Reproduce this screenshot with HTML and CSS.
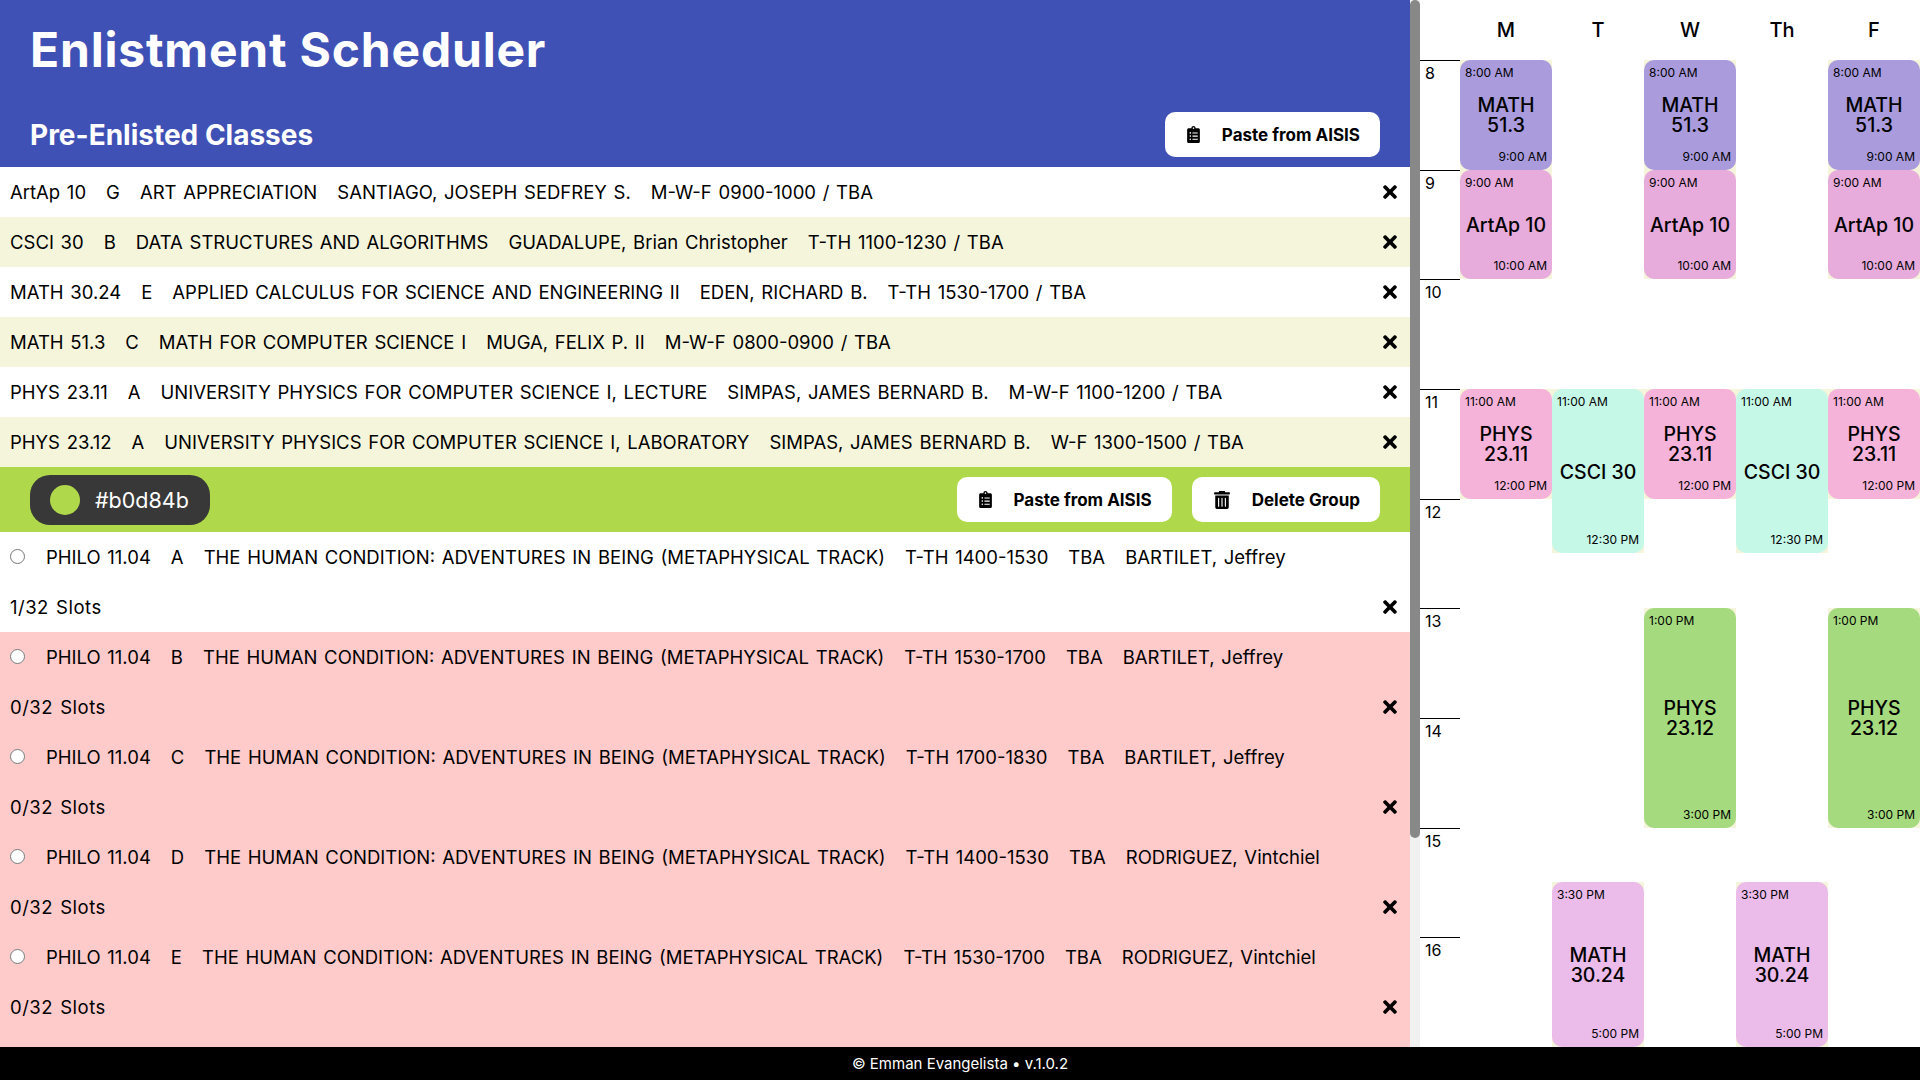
FILE: index.html
```html
<!DOCTYPE html>
<html lang="en">

<head>
  <meta charset="UTF-8" />
  <meta name="viewport" content="width=device-width, initial-scale=1.0" />
  <title>Enlistment Scheduler</title>
  <link rel="stylesheet" href="styles.css">
</head>

<body>
  <svg class="defs" width="0" height="0">
    <symbol id="i-x" viewBox="0 0 352 512">
      <path d="M242.72 256l100.07-100.07c12.28-12.28 12.28-32.19 0-44.48l-22.24-22.24c-12.28-12.28-32.19-12.28-44.48 0L176 189.28 75.93 89.21c-12.28-12.28-32.19-12.28-44.48 0L9.21 111.45c-12.28 12.28-12.28 32.19 0 44.48L109.28 256 9.21 356.07c-12.28 12.28-12.28 32.19 0 44.48l22.24 22.24c12.28 12.28 32.2 12.28 44.48 0L176 322.72l100.07 100.07c12.28 12.28 32.2 12.28 44.48 0l22.24-22.24c12.28-12.28 12.28-32.19 0-44.48L242.72 256z" />
    </symbol>
    <symbol id="i-clip" viewBox="0 0 384 512">
      <path d="M336 64h-80c0-35.3-28.7-64-64-64s-64 28.7-64 64H48C21.5 64 0 85.5 0 112v352c0 26.5 21.5 48 48 48h288c26.5 0 48-21.5 48-48V112c0-26.5-21.5-48-48-48zM96 424c-13.3 0-24-10.7-24-24s10.7-24 24-24 24 10.7 24 24-10.7 24-24 24zm0-96c-13.3 0-24-10.7-24-24s10.7-24 24-24 24 10.7 24 24-10.7 24-24 24zm0-96c-13.3 0-24-10.7-24-24s10.7-24 24-24 24 10.7 24 24-10.7 24-24 24zm96-192c13.3 0 24 10.7 24 24s-10.7 24-24 24-24-10.7-24-24 10.7-24 24-24zm128 368c0 4.4-3.6 8-8 8H168c-4.4 0-8-3.6-8-8v-16c0-4.4 3.6-8 8-8h144c4.4 0 8 3.6 8 8v16zm0-96c0 4.4-3.6 8-8 8H168c-4.4 0-8-3.6-8-8v-16c0-4.4 3.6-8 8-8h144c4.4 0 8 3.6 8 8v16zm0-96c0 4.4-3.6 8-8 8H168c-4.4 0-8-3.6-8-8v-16c0-4.4 3.6-8 8-8h144c4.4 0 8 3.6 8 8v16z" />
    </symbol>
    <symbol id="i-trash" viewBox="0 0 448 512">
      <path d="M32 464a48 48 0 0 0 48 48h288a48 48 0 0 0 48-48V128H32zm272-256a16 16 0 0 1 32 0v224a16 16 0 0 1-32 0zm-96 0a16 16 0 0 1 32 0v224a16 16 0 0 1-32 0zm-96 0a16 16 0 0 1 32 0v224a16 16 0 0 1-32 0zM432 32H312l-3.76-23.63A24 24 0 0 0 286.75 0H161.25a24 24 0 0 0-21.5 8.37L136 32H16A16 16 0 0 0 0 48v32a16 16 0 0 0 16 16h416a16 16 0 0 0 16-16V48a16 16 0 0 0-16-16z" />
    </symbol>
  </svg>

  <div id="main">
    <div id="classes">
      <header>
        <h1>Enlistment Scheduler</h1>
        <div class="header-row">
          <h2>Pre-Enlisted Classes</h2>
          <button class="btn" type="button"><svg class="icon-clip"><use href="#i-clip" /></svg>Paste from AISIS</button>
        </div>
      </header>

      <div class="row">
        <div class="fields"><span>ArtAp 10</span><span>G</span><span>ART APPRECIATION</span><span>SANTIAGO, JOSEPH SEDFREY S.</span><span>M-W-F 0900-1000 / TBA</span></div>
        <svg class="icon-x"><use href="#i-x" /></svg>
      </div>
      <div class="row">
        <div class="fields"><span>CSCI 30</span><span>B</span><span>DATA STRUCTURES AND ALGORITHMS</span><span>GUADALUPE, Brian Christopher</span><span>T-TH 1100-1230 / TBA</span></div>
        <svg class="icon-x"><use href="#i-x" /></svg>
      </div>
      <div class="row">
        <div class="fields"><span>MATH 30.24</span><span>E</span><span>APPLIED CALCULUS FOR SCIENCE AND ENGINEERING II</span><span>EDEN, RICHARD B.</span><span>T-TH 1530-1700 / TBA</span></div>
        <svg class="icon-x"><use href="#i-x" /></svg>
      </div>
      <div class="row">
        <div class="fields"><span>MATH 51.3</span><span>C</span><span>MATH FOR COMPUTER SCIENCE I</span><span>MUGA, FELIX P. II</span><span>M-W-F 0800-0900 / TBA</span></div>
        <svg class="icon-x"><use href="#i-x" /></svg>
      </div>
      <div class="row">
        <div class="fields"><span>PHYS 23.11</span><span>A</span><span>UNIVERSITY PHYSICS FOR COMPUTER SCIENCE I, LECTURE</span><span>SIMPAS, JAMES BERNARD B.</span><span>M-W-F 1100-1200 / TBA</span></div>
        <svg class="icon-x"><use href="#i-x" /></svg>
      </div>
      <div class="row">
        <div class="fields"><span>PHYS 23.12</span><span>A</span><span>UNIVERSITY PHYSICS FOR COMPUTER SCIENCE I, LABORATORY</span><span>SIMPAS, JAMES BERNARD B.</span><span>W-F 1300-1500 / TBA</span></div>
        <svg class="icon-x"><use href="#i-x" /></svg>
      </div>

      <div class="group-bar">
        <div class="color-pill"><span class="swatch"></span>#b0d84b</div>
        <div class="group-actions">
          <button class="btn" type="button"><svg class="icon-clip"><use href="#i-clip" /></svg>Paste from AISIS</button>
          <button class="btn" type="button"><svg class="icon-trash"><use href="#i-trash" /></svg>Delete Group</button>
        </div>
      </div>

      <div class="section">
        <label class="line">
          <input type="radio" name="philo" />
          <span class="fields"><span>PHILO 11.04</span><span>A</span><span>THE HUMAN CONDITION: ADVENTURES IN BEING (METAPHYSICAL TRACK)</span><span>T-TH 1400-1530</span><span>TBA</span><span>BARTILET, Jeffrey</span></span>
        </label>
        <div class="line"><span class="slots">1/32 Slots</span><svg class="icon-x"><use href="#i-x" /></svg></div>
      </div>
      <div class="section full">
        <label class="line">
          <input type="radio" name="philo" />
          <span class="fields"><span>PHILO 11.04</span><span>B</span><span>THE HUMAN CONDITION: ADVENTURES IN BEING (METAPHYSICAL TRACK)</span><span>T-TH 1530-1700</span><span>TBA</span><span>BARTILET, Jeffrey</span></span>
        </label>
        <div class="line"><span class="slots">0/32 Slots</span><svg class="icon-x"><use href="#i-x" /></svg></div>
      </div>
      <div class="section full">
        <label class="line">
          <input type="radio" name="philo" />
          <span class="fields"><span>PHILO 11.04</span><span>C</span><span>THE HUMAN CONDITION: ADVENTURES IN BEING (METAPHYSICAL TRACK)</span><span>T-TH 1700-1830</span><span>TBA</span><span>BARTILET, Jeffrey</span></span>
        </label>
        <div class="line"><span class="slots">0/32 Slots</span><svg class="icon-x"><use href="#i-x" /></svg></div>
      </div>
      <div class="section full">
        <label class="line">
          <input type="radio" name="philo" />
          <span class="fields"><span>PHILO 11.04</span><span>D</span><span>THE HUMAN CONDITION: ADVENTURES IN BEING (METAPHYSICAL TRACK)</span><span>T-TH 1400-1530</span><span>TBA</span><span>RODRIGUEZ, Vintchiel</span></span>
        </label>
        <div class="line"><span class="slots">0/32 Slots</span><svg class="icon-x"><use href="#i-x" /></svg></div>
      </div>
      <div class="section full">
        <label class="line">
          <input type="radio" name="philo" />
          <span class="fields"><span>PHILO 11.04</span><span>E</span><span>THE HUMAN CONDITION: ADVENTURES IN BEING (METAPHYSICAL TRACK)</span><span>T-TH 1530-1700</span><span>TBA</span><span>RODRIGUEZ, Vintchiel</span></span>
        </label>
        <div class="line"><span class="slots">0/32 Slots</span><svg class="icon-x"><use href="#i-x" /></svg></div>
      </div>
      <div class="section full more"></div>
    </div>

    <div class="scrollbar"><div class="thumb"></div></div>

    <div id="calendar">
      <div class="corner"></div>
      <div class="day">M</div>
      <div class="day">T</div>
      <div class="day">W</div>
      <div class="day">Th</div>
      <div class="day">F</div>

      <div class="hour">8</div>
      <div class="hour">9</div>
      <div class="hour">10</div>
      <div class="hour">11</div>
      <div class="hour">12</div>
      <div class="hour">13</div>
      <div class="hour">14</div>
      <div class="hour">15</div>
      <div class="hour">16</div>

      <div class="slot on-m math513"><div class="event"><span>8:00 AM</span><b>MATH 51.3</b><span class="end">9:00 AM</span></div></div>
      <div class="slot on-w math513"><div class="event"><span>8:00 AM</span><b>MATH 51.3</b><span class="end">9:00 AM</span></div></div>
      <div class="slot on-f math513"><div class="event"><span>8:00 AM</span><b>MATH 51.3</b><span class="end">9:00 AM</span></div></div>

      <div class="slot on-m artap10"><div class="event"><span>9:00 AM</span><b>ArtAp 10</b><span class="end">10:00 AM</span></div></div>
      <div class="slot on-w artap10"><div class="event"><span>9:00 AM</span><b>ArtAp 10</b><span class="end">10:00 AM</span></div></div>
      <div class="slot on-f artap10"><div class="event"><span>9:00 AM</span><b>ArtAp 10</b><span class="end">10:00 AM</span></div></div>

      <div class="slot on-m phys2311"><div class="event"><span>11:00 AM</span><b>PHYS 23.11</b><span class="end">12:00 PM</span></div></div>
      <div class="slot on-w phys2311"><div class="event"><span>11:00 AM</span><b>PHYS 23.11</b><span class="end">12:00 PM</span></div></div>
      <div class="slot on-f phys2311"><div class="event"><span>11:00 AM</span><b>PHYS 23.11</b><span class="end">12:00 PM</span></div></div>

      <div class="slot on-t csci30"><div class="event"><span>11:00 AM</span><b>CSCI 30</b><span class="end">12:30 PM</span></div></div>
      <div class="slot on-th csci30"><div class="event"><span>11:00 AM</span><b>CSCI 30</b><span class="end">12:30 PM</span></div></div>

      <div class="slot on-w phys2312"><div class="event"><span>1:00 PM</span><b>PHYS 23.12</b><span class="end">3:00 PM</span></div></div>
      <div class="slot on-f phys2312"><div class="event"><span>1:00 PM</span><b>PHYS 23.12</b><span class="end">3:00 PM</span></div></div>

      <div class="slot on-t math3024"><div class="event"><span>3:30 PM</span><b>MATH 30.24</b><span class="end">5:00 PM</span></div></div>
      <div class="slot on-th math3024"><div class="event"><span>3:30 PM</span><b>MATH 30.24</b><span class="end">5:00 PM</span></div></div>
    </div>
  </div>

  <footer>© Emman Evangelista • v.1.0.2</footer>
</body>

</html>
```

FILE: styles.css
```css
* {
  box-sizing: border-box;
}

body {
  margin: 0;
  height: 1080px;
  overflow: hidden;
  display: flex;
  flex-direction: column;
  font-family: "Inter", "Liberation Sans", sans-serif;
  font-size: 18.5px;
  color: #000;
  background: #fff;
}

.defs {
  position: absolute;
}

#main {
  display: flex;
  height: 1047px;
}

#classes {
  flex: 0 0 1410px;
  overflow: hidden;
}

.scrollbar {
  flex: 0 0 10px;
  background: #f1f1f1;
}

.thumb {
  height: 838px;
  border-radius: 5px;
  background: #888;
}

header {
  height: 167px;
  padding: 0 30px;
  background: #3f51b5;
  color: #fff;
}

h1 {
  margin: 0;
  height: 100px;
  line-height: 100px;
  font-size: 48px;
  font-weight: 700;
  letter-spacing: 0.8px;
}

h2 {
  margin: 0;
  font-size: 28px;
  font-weight: 700;
}

.header-row {
  display: flex;
  align-items: center;
  justify-content: space-between;
  padding-top: 12px;
}

.btn {
  display: flex;
  align-items: center;
  gap: 22px;
  height: 45px;
  padding: 0 20px 0 22px;
  border: none;
  border-radius: 10px;
  background: #fff;
  color: #000;
  font-family: inherit;
  font-size: 17px;
  font-weight: 700;
}

.icon-clip {
  width: 13px;
  height: 17px;
}

.icon-trash {
  width: 16px;
  height: 18px;
}

.icon-x {
  flex: none;
  width: 14px;
  height: 20px;
}

.row,
.line {
  display: flex;
  align-items: center;
  justify-content: space-between;
  height: 50px;
  padding: 0 13px 0 10px;
}

.row:nth-of-type(even) {
  background: #f5f5dc;
}

.fields {
  display: flex;
  gap: 20px;
  white-space: nowrap;
  word-spacing: 1.5px;
}

.slots {
  letter-spacing: 0.5px;
  word-spacing: 1.5px;
}

.group-bar {
  display: flex;
  align-items: center;
  justify-content: space-between;
  height: 65px;
  padding: 0 30px;
  background: #b0d84b;
}

.color-pill {
  display: flex;
  align-items: center;
  gap: 15px;
  width: 180px;
  height: 50px;
  padding-left: 20px;
  border-radius: 20px;
  background: #383838;
  color: #fff;
  font-size: 21.5px;
}

.swatch {
  width: 30px;
  height: 30px;
  border-radius: 50%;
  background: #b0d84b;
}

.group-actions {
  display: flex;
  gap: 20px;
}

.section.full {
  background: #ffcaca;
}

.section.more {
  height: 15px;
}

.line input {
  flex: none;
  width: 15px;
  height: 15px;
  margin: 0 21px 2px 0;
}

label.line {
  justify-content: flex-start;
}

#calendar {
  flex: 1;
  display: grid;
  grid-template-columns: 40px repeat(5, 1fr);
  grid-template-rows: 60px repeat(18, 1fr);
  overflow: hidden;
}

.day {
  display: flex;
  align-items: center;
  justify-content: center;
  font-size: 20px;
  font-weight: 500;
}

.hour {
  grid-column: 1;
  grid-row: span 2;
  padding: 2px 0 0 5px;
  border-top: 1px solid #000;
  font-size: 16px;
}

.slot {
  background: #f5f5dc;
}

.event {
  display: flex;
  flex-direction: column;
  justify-content: space-between;
  height: 100%;
  padding: 5px 5px 6px;
  border-radius: 10px;
  font-size: 12px;
}

.event b {
  padding-top: 2px;
  font-size: 19.5px;
  font-weight: 500;
  line-height: 20px;
  text-align: center;
}

.end {
  text-align: right;
}

.on-m { grid-column: 2; }
.on-t { grid-column: 3; }
.on-w { grid-column: 4; }
.on-th { grid-column: 5; }
.on-f { grid-column: 6; }

.math513 { grid-row: 2 / 4; }
.artap10 { grid-row: 4 / 6; }
.phys2311 { grid-row: 8 / 10; }
.csci30 { grid-row: 8 / 11; }
.phys2312 { grid-row: 12 / 16; }
.math3024 { grid-row: 17 / 20; }

.math513 .event { background: #a99bdc; }
.artap10 .event { background: #e7abdc; }
.phys2311 .event { background: #f6b3d9; }
.csci30 .event { background: #c6f8e8; }
.phys2312 .event { background: #a6da7e; }
.math3024 .event { background: #ebbbea; }

footer {
  display: flex;
  align-items: center;
  justify-content: center;
  height: 33px;
  background: #000;
  color: #fff;
  font-size: 15px;
}
```
